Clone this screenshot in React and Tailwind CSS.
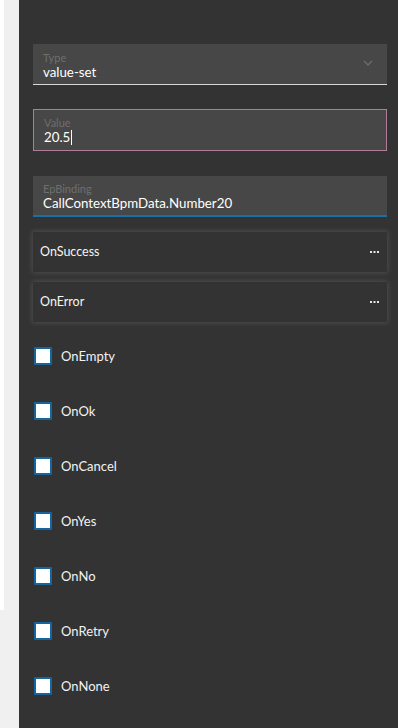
import React from "react";

const Dots = () => (
  <svg width="9" height="4" viewBox="0 0 9 4">
    <rect x="0" y="1" width="2" height="2" fill="#e8e8e8" />
    <rect x="3.5" y="1" width="2" height="2" fill="#e8e8e8" />
    <rect x="7" y="1" width="2" height="2" fill="#e8e8e8" />
  </svg>
);

const Check = ({ label }) => (
  <div className="flex items-center h-[18px] mb-[37px]">
    <div className="w-[18px] h-[18px] border-2 border-[#1565a0] bg-white rounded-[1px]" />
    <span className="ml-[9px] text-[13px] text-[#f2f2f2] leading-none">{label}</span>
  </div>
);

export default function App() {
  return (
    <div
      className="flex w-[398px] h-[728px] overflow-hidden"
      style={{ fontFamily: "Lato, 'Noto Sans', sans-serif" }}
    >
      <div className="w-[19px] h-full bg-[#f0f0f0] flex">
        <div className="w-[4px] h-[610px] bg-white" />
      </div>
      <div className="flex-1 bg-[#333333] pl-[14px] pr-[11px] pt-[44px] flex flex-col">
        <div className="h-[41px] shrink-0 bg-[#474747] border-b border-[#d8d8d8] pl-[10px] pr-[14px] pt-[3px] flex items-center justify-between">
          <div className="flex flex-col">
            <span className="text-[11px] leading-[12px] text-[#6e6e6e]">Type</span>
            <span className="text-[13.3px] leading-[16px] text-white">value-set</span>
          </div>
          <svg width="10" height="6" viewBox="0 0 10 6" className="mt-[-5px]">
            <path d="M1 1 L5 5 L9 1" fill="none" stroke="#6a6a6a" strokeWidth="1.5" />
          </svg>
        </div>

        <div className="mt-[24px] h-[42px] shrink-0 bg-[#474747] border border-[#b07d99] pl-[10px] pt-[2px] flex flex-col justify-center">
          <span className="text-[11px] leading-[12px] text-[#6e6e6e]">Value</span>
          <span className="text-[13.3px] leading-[16px] text-white flex items-center">
            20.5<span className="inline-block w-px h-[15px] bg-white ml-[1px]" />
          </span>
        </div>

        <div className="mt-[25px] h-[41px] shrink-0 bg-[#474747] border-b-2 border-[#1a6fa8] pl-[10px] pt-[3px] flex flex-col justify-center">
          <span className="text-[11px] leading-[12px] text-[#6e6e6e]">EpBinding</span>
          <span className="text-[13.3px] leading-[16px] text-white">CallContextBpmData.Number20</span>
        </div>

        <div className="mt-[15px] h-[40px] shrink-0 bg-[#333333] shadow-[0_0_5px_1px_rgba(255,255,255,0.13)] pl-[7px] pr-[8px] flex items-center justify-between">
          <span className="text-[12.5px] text-[#f5f5f5]">OnSuccess</span>
          <Dots />
        </div>

        <div className="mt-[10px] h-[40px] shrink-0 bg-[#333333] shadow-[0_0_5px_1px_rgba(255,255,255,0.13)] pl-[7px] pr-[8px] flex items-center justify-between">
          <span className="text-[12.5px] text-[#f5f5f5]">OnError</span>
          <Dots />
        </div>

        <div className="mt-[25px] pl-[1px] flex flex-col">
          <Check label="OnEmpty" />
          <Check label="OnOk" />
          <Check label="OnCancel" />
          <Check label="OnYes" />
          <Check label="OnNo" />
          <Check label="OnRetry" />
          <Check label="OnNone" />
        </div>
      </div>
    </div>
  );
}
